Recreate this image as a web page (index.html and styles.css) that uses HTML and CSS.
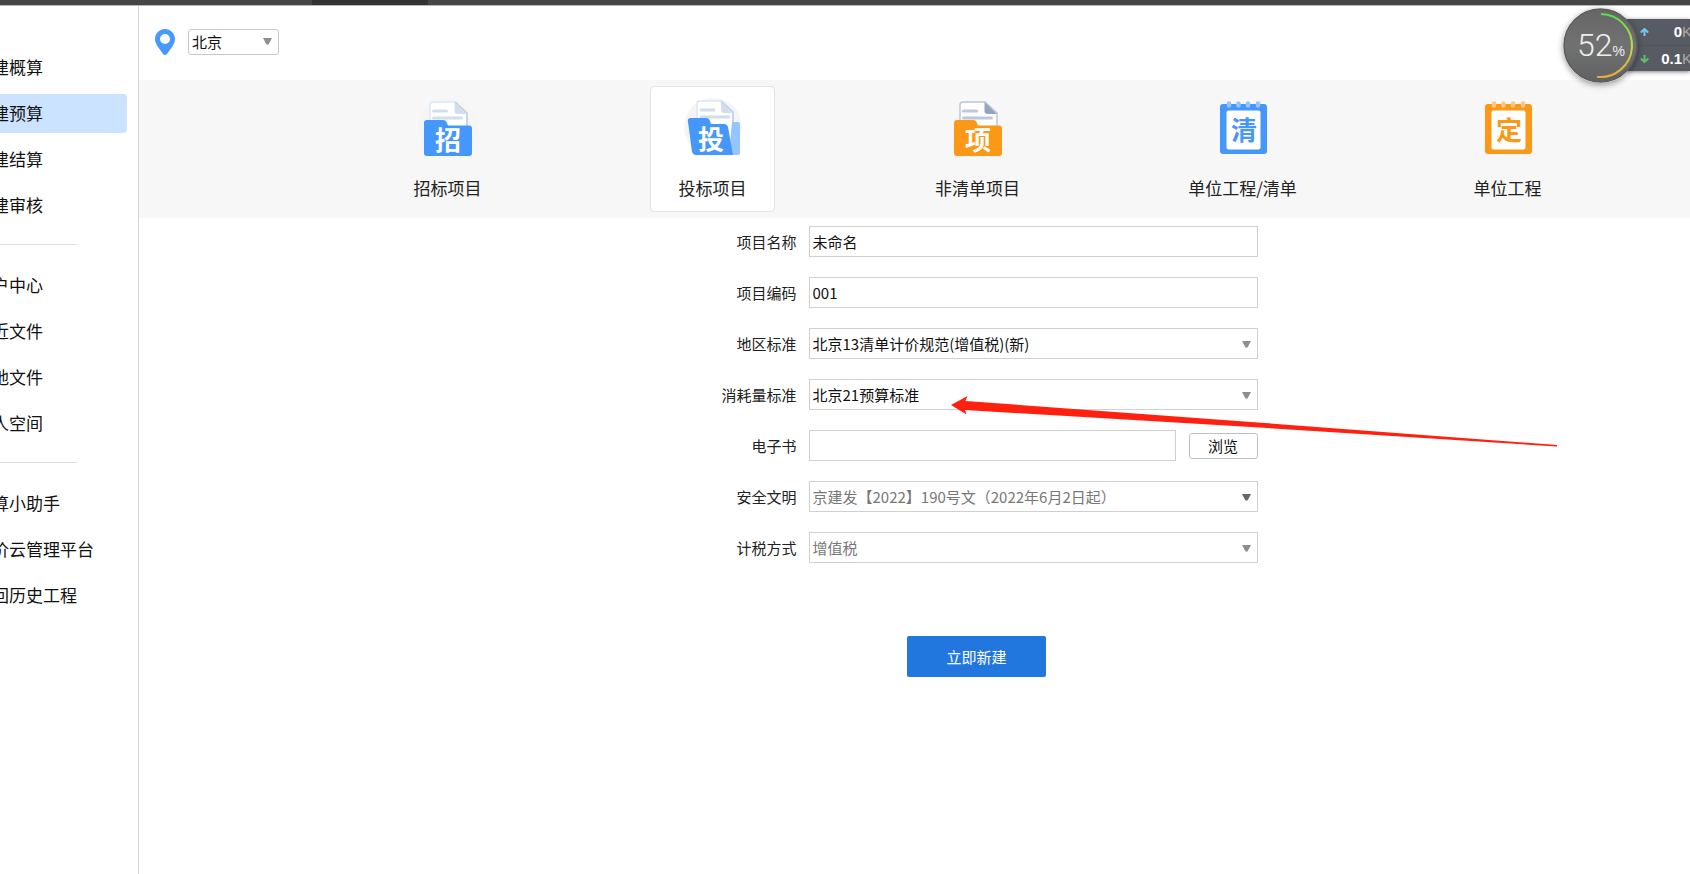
FILE: index.html
```html
<!DOCTYPE html>
<html lang="zh-CN">
<head>
<meta charset="utf-8">
<meta name="viewport" content="width=device-width, initial-scale=1">
<title>投标项目</title>
<link rel="stylesheet" href="styles.css">
</head>
<body>
<div class="titlebar"><div class="titlebar-tab"></div></div>
<div class="app">
  <nav class="sidebar">
    <ul class="menu">
      <li><a class="menu-item" href="#">建概算</a></li>
      <li><a class="menu-item menu-item-active" href="#">建预算</a></li>
      <li><a class="menu-item" href="#">建结算</a></li>
      <li><a class="menu-item" href="#">建审核</a></li>
    </ul>
    <hr class="menu-divider">
    <ul class="menu">
      <li><a class="menu-item" href="#">户中心</a></li>
      <li><a class="menu-item" href="#">近文件</a></li>
      <li><a class="menu-item" href="#">地文件</a></li>
      <li><a class="menu-item" href="#">人空间</a></li>
    </ul>
    <hr class="menu-divider">
    <ul class="menu">
      <li><a class="menu-item" href="#">算小助手</a></li>
      <li><a class="menu-item" href="#">价云管理平台</a></li>
      <li><a class="menu-item" href="#">回历史工程</a></li>
    </ul>
  </nav>

  <main class="main">
    <header class="location">
      <label class="location-pin" for="city">
        <svg width="20" height="26" viewBox="0 0 20 26"><path fill="#4599ff" fill-rule="evenodd" d="M10 0C4.400 0 0 4.500 0 10c0 3 1.500 5.600 3 8l5 7c1 1.300 3 1.300 4 0l5-7c1.500-2.400 3-5 3-8C20 4.500 15.600 0 10 0zm0 5a5 5 0 1 1 0 10a5 5 0 0 1 0-10z"/></svg>
      </label>
      <div class="select-wrap location-select">
        <select id="city" class="select-city"><option>北京</option></select>
        <svg class="caret" width="9" height="7" viewBox="0 0 9 7"><path d="M0 0h9L5.500 6.500h-2z"/></svg>
      </div>
    </header>

    <div class="types">
      <div class="type-slot"><button type="button" class="type">
        <svg class="type-icon" width="60" height="60" viewBox="0 0 60 60">
          <circle cx="30" cy="30" r="29.500" fill="#f5f5f5"/>
          <path d="M12 32V7q0-3 3-3h22l12 11v17z" fill="#fff" stroke="#dce6f3" stroke-width="1.500"/>
          <path d="M37 4l12 11v14" fill="none" stroke="#b9cfea" stroke-width="1.500"/>
          <path d="M36.500 4v9q0 3 3 3H49z" fill="#d2deec"/>
          <path d="M15.500 13h13M15.500 20h28" stroke="#d2deec" stroke-width="3" stroke-linecap="round"/>
          <path d="M6 25q0-3 3-3h16q3 0 4 3l1 2.500h21q3 0 3 3V55q0 3-3 3H9q-3 0-3-3z" fill="#4597fb"/>
          <text class="glyph glyph-light" x="30" y="52">招</text>
        </svg>
        <span>招标项目</span></button></div>
      <div class="type-slot"><button type="button" class="type type-active" aria-pressed="true">
        <svg class="type-icon" width="60" height="60" viewBox="0 0 60 60">
          <circle cx="30" cy="29" r="29" fill="#f5f5f5"/>
          <path d="M14 31V6q0-3 3-3h21l12 11v32H14z" fill="#fff" stroke="#dce6f3" stroke-width="1.500"/>
          <path d="M38 3l12 11v14" fill="none" stroke="#b9cfea" stroke-width="1.500"/>
          <path d="M38 3v9q0 3 3 3h9z" fill="#d2deec"/>
          <path d="M18 12h13M18 19h28" stroke="#d2deec" stroke-width="3" stroke-linecap="round"/>
          <path d="M49 24h6q2 0 2 2v29q0 2-2 2h-9z" fill="#94c5ff"/>
          <path d="M5 24q-1-4 3-4h15q3 0 4 3l1 3h13q3 0 4 3l5 28H13q-3 0-4-3z" fill="#4597fb"/>
          <text class="glyph glyph-light" x="28" y="51">投</text>
        </svg>
        <span>投标项目</span></button></div>
      <div class="type-slot"><button type="button" class="type">
        <svg class="type-icon" width="60" height="60" viewBox="0 0 60 60">
          <path d="M12 32V7q0-3 3-3h22l12 11v17z" fill="#fff" stroke="#b9c7d8" stroke-width="1.500"/>
          <path d="M36.500 4v9q0 3 3 3H49z" fill="#93a5bd"/>
          <path d="M15.500 13h13M15.500 20h28" stroke="#bcc8d8" stroke-width="3" stroke-linecap="round"/>
          <path d="M6 25q0-3 3-3h16q3 0 4 3l1 2.500h21q3 0 3 3V55q0 3-3 3H9q-3 0-3-3z" fill="#fb9817"/>
          <text class="glyph glyph-light" x="30" y="52">项</text>
        </svg>
        <span>非清单项目</span></button></div>
      <div class="type-slot"><button type="button" class="type">
        <svg class="type-icon" width="60" height="60" viewBox="0 0 60 60">
          <rect x="7" y="6" width="47" height="50" rx="3" fill="#4597fb"/>
          <rect x="13.500" y="12.500" width="34" height="39" rx="2" fill="#fff"/>
          <path d="M16 5.500v2M25.500 5.500v2M35 5.500v2M45 5.500v2" stroke="#94c5ff" stroke-width="4.500" stroke-linecap="round"/>
          <text class="glyph glyph-blue" x="31" y="42">清</text>
        </svg>
        <span>单位工程/清单</span></button></div>
      <div class="type-slot"><button type="button" class="type">
        <svg class="type-icon" width="60" height="60" viewBox="0 0 60 60">
          <rect x="7" y="6" width="47" height="50" rx="3" fill="#fb9817"/>
          <rect x="13.500" y="12.500" width="34" height="39" rx="2" fill="#fff"/>
          <path d="M16 5.500v2M25.500 5.500v2M35 5.500v2M45 5.500v2" stroke="#fdc889" stroke-width="4.500" stroke-linecap="round"/>
          <text class="glyph glyph-orange" x="31" y="42">定</text>
        </svg>
        <span>单位工程</span></button></div>
    </div>

    <form class="form">
      <div class="row"><label class="row-label" for="name">项目名称</label><input class="field" id="name" type="text" value="未命名"></div>
      <div class="row"><label class="row-label" for="code">项目编码</label><input class="field" id="code" type="text" value="001"></div>
      <div class="row"><label class="row-label" for="region">地区标准</label>
        <div class="select-wrap"><select class="field" id="region"><option>北京13清单计价规范(增值税)(新)</option></select><svg class="caret" width="9" height="7" viewBox="0 0 9 7"><path d="M0 0h9L5.500 6.500h-2z"/></svg></div></div>
      <div class="row"><label class="row-label" for="quota">消耗量标准</label>
        <div class="select-wrap"><select class="field" id="quota"><option>北京21预算标准</option></select><svg class="caret" width="9" height="7" viewBox="0 0 9 7"><path d="M0 0h9L5.500 6.500h-2z"/></svg>
          <svg class="arrow" width="608" height="54" viewBox="0 0 608 54"><path fill="#ff2010" d="M0 13L16.500 4L14.500 9L300 30L606 53V54.500L300 35L14 18L15.500 22.500z"/></svg></div></div>
      <div class="row"><label class="row-label" for="book">电子书</label>
        <div class="file"><input class="field" id="book" type="text"><button type="button" class="browse">浏览</button></div></div>
      <div class="row"><label class="row-label" for="safety">安全文明</label>
        <div class="select-wrap"><select class="field field-muted" id="safety"><option>京建发【2022】190号文（2022年6月2日起）</option></select><svg class="caret caret-dark" width="9" height="7" viewBox="0 0 9 7"><path d="M0 0h9L5.500 6.500h-2z"/></svg></div></div>
      <div class="row"><label class="row-label" for="tax">计税方式</label>
        <div class="select-wrap"><select class="field field-muted" id="tax"><option>增值税</option></select><svg class="caret" width="9" height="7" viewBox="0 0 9 7"><path d="M0 0h9L5.500 6.500h-2z"/></svg></div></div>
      <button type="submit" class="submit">立即新建</button>
    </form>
  </main>
</div>

<aside class="monitor">
  <div class="gauge">
    <svg class="gauge-ring" width="75" height="75" viewBox="0 0 75 75">
      <defs>
        <linearGradient id="disc" x1="0" y1="0" x2="0" y2="1"><stop offset="0" stop-color="#666"/><stop offset=".5" stop-color="#717171"/><stop offset="1" stop-color="#606262"/></linearGradient>
        <linearGradient id="ring" x1="0" y1="0" x2="0" y2="1"><stop offset="0" stop-color="#52e052"/><stop offset=".5" stop-color="#bfdc44"/><stop offset="1" stop-color="#eda83c"/></linearGradient>
      </defs>
      <circle cx="37.500" cy="37.500" r="36.500" fill="url(#disc)" stroke="#5c5c5c" stroke-width="1.500"/>
      <path d="M38 6a31.500 31.500 0 1 1-4 62.800" fill="none" stroke="url(#ring)" stroke-width="2"/>
    </svg>
    <span class="gauge-value">52</span><span class="gauge-unit">%</span>
  </div>
  <div class="rates">
    <div class="rate"><svg width="9" height="8" viewBox="0 0 9 8"><path d="M4.500 8V1M.8 4.500L4.500 1l3.700 3.500" fill="none" stroke="#6fc8f8" stroke-width="2"/></svg><span class="rate-value">0</span><span class="rate-unit">K</span></div>
    <div class="rate"><svg width="9" height="8" viewBox="0 0 9 8"><path d="M4.500 0v7M.8 3.500L4.500 7l3.700-3.500" fill="none" stroke="#5bc266" stroke-width="2"/></svg><span class="rate-value">0.1</span><span class="rate-unit">K</span></div>
  </div>
</aside>
</body>
</html>
```
FILE: styles.css
```css
* { box-sizing: border-box; }

body {
  margin: 0;
  min-height: 100vh;
  display: flex;
  flex-direction: column;
  overflow: hidden;
  position: relative;
  background: #fff;
  color: #111;
  font: 15px/20px "Noto Sans CJK SC", sans-serif;
}

button, input, select { font: inherit; color: inherit; }

.titlebar {
  height: 6px;
  padding-left: 312px;
  background: #464646;
  border-bottom: 1px solid #b8b8b8;
}
.titlebar-tab { width: 116px; height: 5px; background: #323232; }

.app { flex: 1; display: flex; }

.sidebar {
  width: 139px;
  flex: none;
  padding-top: 42px;
  border-right: 1px solid #d6d6d6;
  overflow: hidden;
}
.menu {
  margin: 0;
  padding: 0 11px 0 0;
  list-style: none;
  display: flex;
  flex-direction: column;
  gap: 7px;
}
.menu-item {
  display: block;
  margin-left: -8px;
  padding-bottom: 2px;
  font-size: 17px;
  line-height: 37px;
  color: #111;
  text-decoration: none;
  white-space: nowrap;
  border-radius: 4px;
}
.menu-item-active { background: #cce3ff; }
.menu-divider {
  width: 77px;
  height: 1px;
  margin: 19px 0 21px;
  border: 0;
  background: #dedede;
}

.main { flex: 1; min-width: 0; }

.location {
  height: 74px;
  padding: 23px 16px;
  display: flex;
  align-items: flex-start;
  gap: 13px;
}
.location-pin { height: 26px; }
.location-pin svg { display: block; }
.location-select { width: 91px; }

.select-wrap { position: relative; }
.select-wrap select {
  display: block;
  width: 100%;
  appearance: none;
}
.select-city {
  height: 26px;
  padding: 0 3px;
  border: 1px solid #c8c8c8;
  border-radius: 3px;
  background: #fff;
}
.caret {
  position: absolute;
  right: 7px;
  top: 13px;
  fill: #8e8e8e;
  pointer-events: none;
}
.location-select .caret { top: 9px; }
.caret-dark { fill: #666; }

.types {
  display: flex;
  padding: 6px 50px 6px 176px;
  background: #f7f7f7;
}
.type-slot { flex: 1; display: flex; justify-content: center; }
.type {
  width: 125px;
  height: 126px;
  padding: 11px 0 0;
  display: flex;
  flex-direction: column;
  align-items: center;
  gap: 18px;
  border: 1px solid transparent;
  border-radius: 4px;
  background: none;
  font-size: 17px;
  line-height: 24px;
  white-space: nowrap;
  color: #222;
}
.type-active { background: #fff; border-color: #dde4ea; }
.glyph {
  font-size: 26px;
  font-weight: 700;
  text-anchor: middle;
}
.glyph-light { fill: #fff; }
.glyph-blue { fill: #4597fb; }
.glyph-orange { fill: #fb9817; }

.form {
  padding: 8px 51px 0 175px;
  display: flex;
  flex-direction: column;
  align-items: center;
  gap: 20px;
}
.row {
  width: 100%;
  max-width: 562px;
  display: grid;
  grid-template-columns: 101px 1fr;
  gap: 12px;
  align-items: center;
}
.row-label { text-align: right; color: #222; }
.field {
  width: 100%;
  height: 31px;
  padding: 0 3px;
  border: 1px solid #d0d0d0;
  border-radius: 0;
  background: #fff;
}
.field-muted { color: #777; }
.file { display: flex; align-items: center; gap: 13px; }
.file .field { flex: 1; min-width: 0; }
.browse {
  width: 69px;
  height: 26px;
  padding: 0;
  border: 1px solid #c0c0c0;
  border-radius: 3px;
  background: #fff;
}
.arrow {
  position: absolute;
  left: 142px;
  top: 13px;
  z-index: 2;
  overflow: visible;
  pointer-events: none;
}
.submit {
  width: 139px;
  height: 41px;
  margin-top: 53px;
  border: 0;
  border-radius: 2px;
  background: #2277df;
  color: #fff;
}

.monitor {
  position: absolute;
  top: 8px;
  right: 0;
  display: flex;
  align-items: flex-start;
  font-family: "Liberation Sans", sans-serif;
}
.gauge {
  position: relative;
  z-index: 1;
  width: 75px;
  height: 75px;
  margin-right: -11px;
  padding: 0 0 0 14px;
  display: flex;
  align-items: baseline;
  line-height: 75px;
  color: #eee;
  border-radius: 50%;
  box-shadow: 0 2px 6px rgba(0, 0, 0, .4);
}
.gauge-ring { position: absolute; left: 0; top: 0; }
.gauge-value, .gauge-unit { position: relative; }
.gauge-value { font: 300 32px/75px Roboto, sans-serif; }
.gauge-unit { font-size: 14px; }
.rates {
  width: 63px;
  margin-top: 11px;
  background: #585b64;
  box-shadow: 0 1px 4px rgba(0, 0, 0, .5);
  overflow: hidden;
}
.rate {
  height: 26px;
  padding-left: 13px;
  display: flex;
  align-items: center;
  color: #fff;
}
.rate + .rate { border-top: 1px solid #50535b; }
.rate svg { flex: none; }
.rate-value { flex: 1; text-align: right; font-weight: 700; }
.rate-unit { width: 8px; color: #aaa; }
```
